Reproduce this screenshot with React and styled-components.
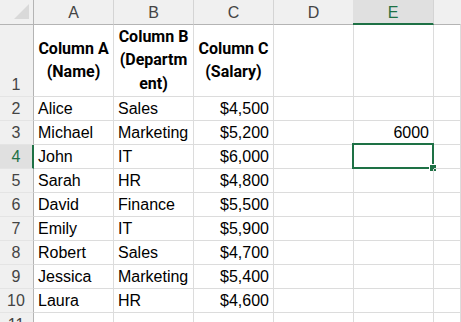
import React from "react";
import styled, { createGlobalStyle, css } from "styled-components";

const GREEN = "#1e7145";
const GRID = "#dcdcdc";
const HEAD_EDGE = "#b4b4b4";

const Global = createGlobalStyle`
  html, body { margin: 0; padding: 0; background: #fff; overflow: hidden; }
  body { font-family: "Liberation Sans", Arial, sans-serif; }
`;

const Sheet = styled.div`
  display: grid;
  grid-template-columns: 34px repeat(5, 80px) 1fr;
  grid-template-rows: 25px 72px repeat(11, 24px);
  width: 461px;
  height: 322px;
  overflow: hidden;
`;

const Corner = styled.div`
  background: #f0f0f0;
  border-right: 1px solid ${HEAD_EDGE};
  border-bottom: 1px solid ${HEAD_EDGE};
  box-sizing: border-box;
  display: flex;
  justify-content: flex-end;
  align-items: flex-end;
  padding: 0 3px 4px 0;
`;

const ColHeader = styled.div`
  box-sizing: border-box;
  background: ${(p) => (p.$active ? "#e0e0e0" : "#f0f0f0")};
  color: ${(p) => (p.$active ? GREEN : "#444")};
  border-right: 1px solid ${(p) => (p.$last ? "transparent" : "#d4d4d4")};
  border-bottom: ${(p) => (p.$active ? `2px solid ${GREEN}` : `1px solid ${HEAD_EDGE}`)};
  display: flex;
  align-items: center;
  justify-content: center;
  font-size: 16px;
  padding-top: ${(p) => (p.$active ? "3px" : "2px")};
  line-height: 18px;
  ${(p) => p.$active && css`margin-left: -1px;`}
`;

const RowHeader = styled.div`
  box-sizing: border-box;
  background: ${(p) => (p.$active ? "#e0e0e0" : "#f0f0f0")};
  color: ${(p) => (p.$active ? GREEN : "#444")};
  border-right: ${(p) => (p.$active ? `2px solid ${GREEN}` : `1px solid ${HEAD_EDGE}`)};
  border-bottom: 1px solid #e4e4e4;
  display: flex;
  align-items: flex-end;
  justify-content: center;
  font-size: 16px;
  line-height: 18px;
  padding: 0 ${(p) => (p.$active ? "0" : "1px")} 2px 0;
`;

const Cell = styled.div`
  position: relative;
  box-sizing: border-box;
  border-right: 1px solid ${GRID};
  border-bottom: 1px solid ${GRID};
  display: flex;
  align-items: flex-end;
  justify-content: ${(p) => (p.$align === "right" ? "flex-end" : p.$align === "center" ? "center" : "flex-start")};
  padding: 0 4px 2px 4px;
  font-size: 16px;
  line-height: 18px;
  color: #000;
  white-space: nowrap;
  ${(p) =>
    p.$head &&
    css`
      align-items: center;
      font-family: Roboto, "Liberation Sans", Arial, sans-serif;
      font-weight: bold;
      font-size: 16px;
      line-height: 23.5px;
      text-align: center;
      white-space: nowrap;
      padding: 0 0 1px 0;
    `}
`;

const Selection = styled.div`
  position: absolute;
  left: -2px;
  top: -2px;
  width: 82px;
  height: 26px;
  box-sizing: border-box;
  border: 2px solid ${GREEN};
  pointer-events: none;
`;

const FillHandle = styled.div`
  position: absolute;
  right: -4px;
  bottom: -4px;
  width: 6px;
  height: 6px;
  background: ${GREEN};
  border: 1px solid #fff;
  border-right: none;
  border-bottom: none;
`;

const Triangle = () => (
  <svg width="16" height="16" viewBox="0 0 16 16">
    <polygon points="0,15 15,15 15,0" fill="#d9d9d9" />
  </svg>
);

const cols = ["A", "B", "C", "D", "E"];
const rows = [
  ["Alice", "Sales", "$4,500"],
  ["Michael", "Marketing", "$5,200"],
  ["John", "IT", "$6,000"],
  ["Sarah", "HR", "$4,800"],
  ["David", "Finance", "$5,500"],
  ["Emily", "IT", "$5,900"],
  ["Robert", "Sales", "$4,700"],
  ["Jessica", "Marketing", "$5,400"],
  ["Laura", "HR", "$4,600"],
];

export default function App() {
  return (
    <>
      <Global />
      <Sheet>
        <Corner>
          <Triangle />
        </Corner>
        {cols.map((c) => (
          <ColHeader key={c} $active={c === "E"}>
            {c}
          </ColHeader>
        ))}
        <ColHeader $last />

        <RowHeader>1</RowHeader>
        <Cell $head $align="center">
          <div>Column A<br />(Name)</div>
        </Cell>
        <Cell $head $align="center">
          <div>Column B<br />(Departm<br />ent)</div>
        </Cell>
        <Cell $head $align="center">
          <div>Column C<br />(Salary)</div>
        </Cell>
        <Cell />
        <Cell />
        <Cell />

        {rows.map((r, i) => {
          const n = i + 2;
          return (
            <React.Fragment key={n}>
              <RowHeader $active={n === 4}>{n}</RowHeader>
              <Cell>{r[0]}</Cell>
              <Cell>{r[1]}</Cell>
              <Cell $align="right">{r[2]}</Cell>
              <Cell />
              <Cell $align="right">
                {n === 3 ? "6000" : null}
                {n === 4 ? (
                  <Selection>
                    <FillHandle />
                  </Selection>
                ) : null}
              </Cell>
              <Cell />
            </React.Fragment>
          );
        })}

        <RowHeader>11</RowHeader>
        <Cell />
        <Cell />
        <Cell />
        <Cell />
        <Cell />
        <Cell />
      </Sheet>
    </>
  );
}
